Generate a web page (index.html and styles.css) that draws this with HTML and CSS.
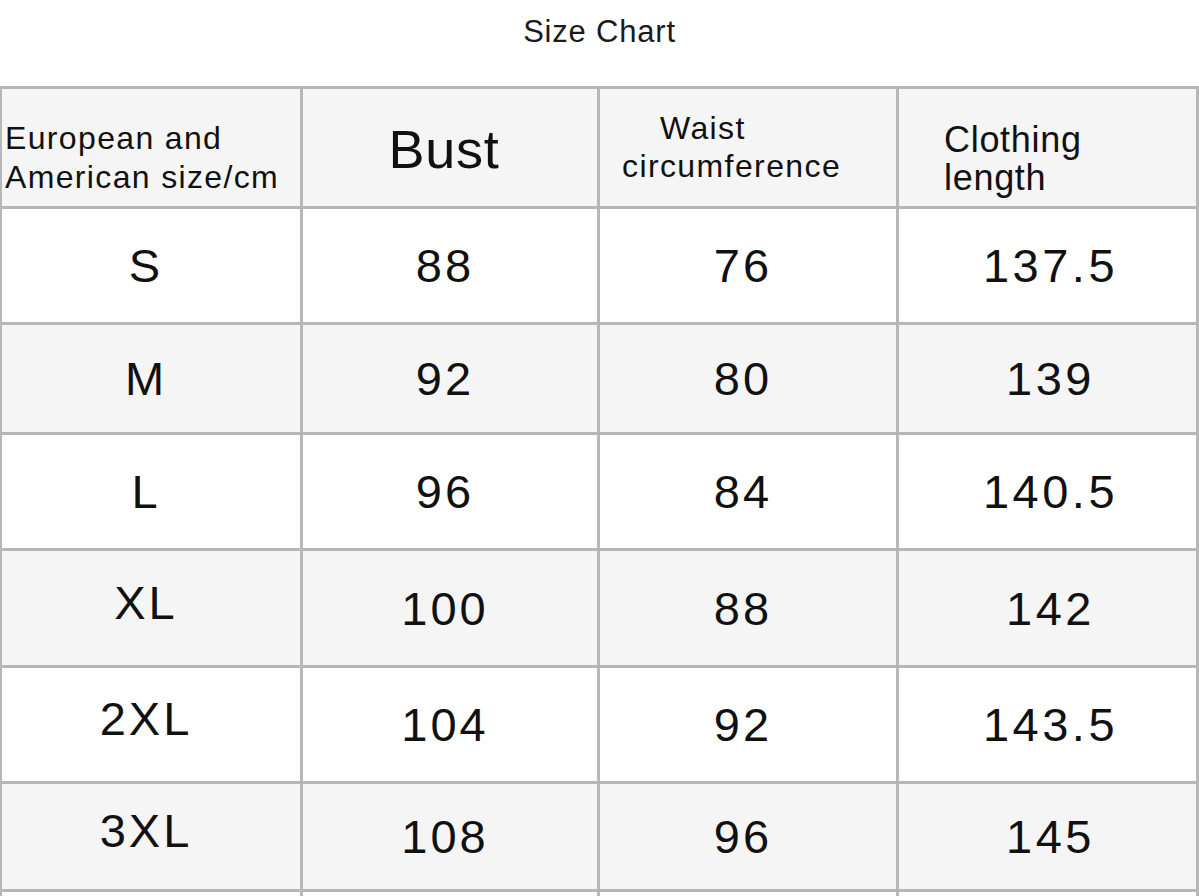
FILE: index.html
```html
<!DOCTYPE html>
<html>
<head>
<meta charset="utf-8">
<link rel="stylesheet" href="styles.css">
</head>
<body>
<div class="title">Size Chart</div>
<div class="chart">
  <div class="cell head h1"><span>European and<br>American size/cm</span></div>
  <div class="cell head h2">Bust</div>
  <div class="cell head h3"><span class="w1">Waist</span><span>circumference</span></div>
  <div class="cell head h4"><span>Clothing<br>length</span></div>

  <div class="cell r1">S</div><div class="cell r1">88</div><div class="cell r1">76</div><div class="cell r1 last">137.5</div>
  <div class="cell r2">M</div><div class="cell r2">92</div><div class="cell r2">80</div><div class="cell r2 last">139</div>
  <div class="cell r3">L</div><div class="cell r3">96</div><div class="cell r3">84</div><div class="cell r3 last">140.5</div>
  <div class="cell r4 up">XL</div><div class="cell r4">100</div><div class="cell r4">88</div><div class="cell r4 last">142</div>
  <div class="cell r5 up">2XL</div><div class="cell r5">104</div><div class="cell r5">92</div><div class="cell r5 last">143.5</div>
  <div class="cell r6 up">3XL</div><div class="cell r6">108</div><div class="cell r6">96</div><div class="cell r6 last">145</div>
  <div class="cell r7"></div><div class="cell r7"></div><div class="cell r7"></div><div class="cell r7"></div>
</div>
</body>
</html>
```

FILE: styles.css
```css
html, body {
  margin: 0;
  padding: 0;
  background: #ffffff;
  font-family: "Liberation Sans", Arial, sans-serif;
  color: #111111;
  overflow: hidden;
}

.title {
  height: 86px;
  box-sizing: border-box;
  padding-top: 14px;
  line-height: 36px;
  font-size: 31px;
  letter-spacing: 0.8px;
  text-align: center;
  color: #1a1a1a;
}

.chart {
  display: grid;
  grid-template-columns: 298px 294px 296px 297px;
  grid-template-rows: 117px 113px 107px 113px 114px 113px 105px 40px;
  gap: 3px;
  padding: 3px 3px 0 2px;
  background: #b7b7b7;
}

.cell {
  display: flex;
  align-items: center;
  justify-content: center;
  box-sizing: border-box;
  padding-right: 10px;
  font-size: 47px;
  letter-spacing: 3px;
  background: #ffffff;
}

.cell.last {
  padding-right: 0;
  padding-left: 6px;
  letter-spacing: 3.5px;
}

.head, .r2, .r4, .r6 {
  background: #f5f5f5;
}

.up {
  padding-bottom: 12px;
}

.head {
  letter-spacing: 0.6px;
  font-size: 32px;
  line-height: 39px;
  padding-right: 0;
}

.h1 {
  justify-content: flex-start;
  align-items: flex-start;
  padding: 30px 0 0 3px;
  font-size: 32px;
  letter-spacing: 1.35px;
}

.h2 {
  font-size: 54px;
  letter-spacing: 0.7px;
  padding: 4px 12px 0 0;
}

.h3 {
  flex-direction: column;
  align-items: flex-start;
  justify-content: flex-start;
  padding: 20px 0 0 22px;
  line-height: 38px;
  letter-spacing: 1.4px;
}

.w1 {
  padding-left: 38px;
}

.h4 {
  justify-content: flex-start;
  align-items: flex-start;
  padding: 32px 0 0 45px;
  font-size: 36px;
  letter-spacing: 0.7px;
  line-height: 38px;
}
```
